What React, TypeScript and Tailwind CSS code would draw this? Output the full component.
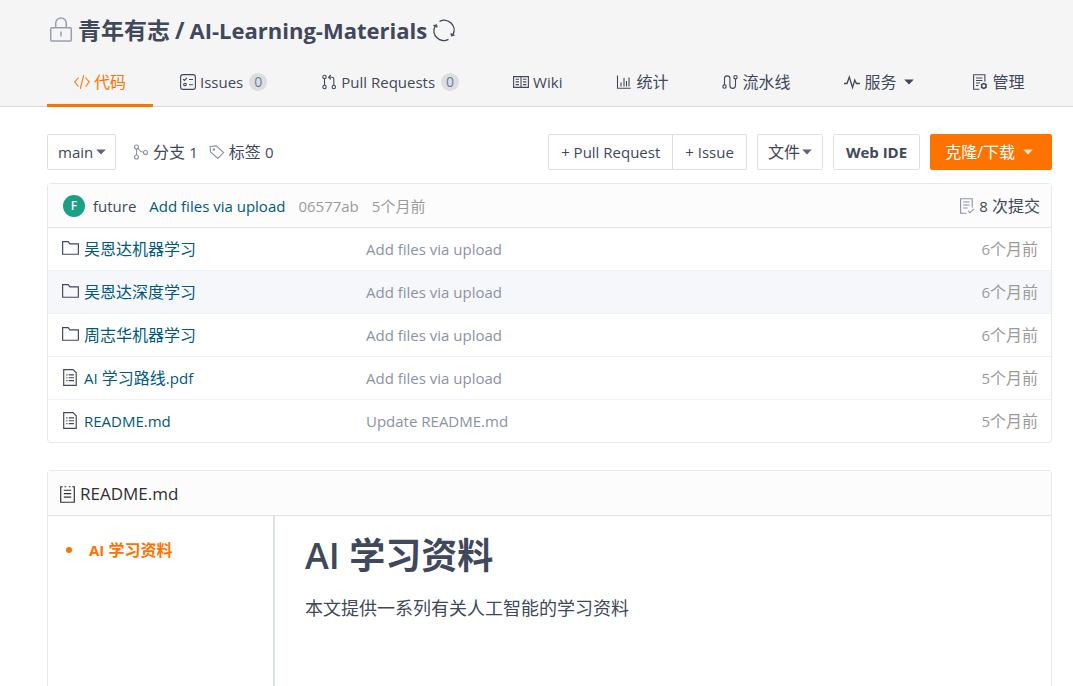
import React, { ReactNode, useState } from "react";

type IconProps = { className?: string; size?: number; children?: ReactNode };

// 16x16 line icon, everything is stroked with the current text color
function Icon({ className = "", size = 16, children }: IconProps) {
  return (
    <svg
      className={`shrink-0 ${className}`}
      width={size}
      height={size}
      viewBox="0 0 16 16"
      fill="none"
      stroke="currentColor"
      strokeWidth="1.1"
      aria-hidden="true"
    >
      {children}
    </svg>
  );
}

function Caret({ className = "" }: { className?: string }) {
  return (
    <svg className={`shrink-0 ${className}`} width="10" height="6" viewBox="0 0 10 6" fill="currentColor" aria-hidden="true">
      <path d="M0.2 0.5h9.6L5 5.5z" />
    </svg>
  );
}

function LockIcon() {
  return (
    <svg className="shrink-0 text-[#9a9eb0]" width="24" height="26" viewBox="0 0 24 26" fill="none" stroke="currentColor" strokeWidth="1.5" aria-hidden="true">
      <rect x="1.7" y="10.7" width="20.6" height="13.3" rx="1" />
      <path d="M6.7 10.5V6.2a5.2 5.2 0 0 1 10.6 0v4.3M12 14.5v5" />
    </svg>
  );
}

function SyncIcon() {
  return (
    <svg width="24" height="24" viewBox="0 0 24 24" fill="none" stroke="currentColor" strokeWidth="1.4" aria-hidden="true">
      <path d="M7.5 3.5A9.8 9.8 0 0 1 21 16.5M16.5 21.3A9.800 9.800 0 0 1 3 8.300" />
      <path d="M1.500 7.500l3.200-.8.400 2.600zM22.500 17.300l-3.200.8-.4-2.600z" fill="currentColor" strokeWidth="0.8" />
    </svg>
  );
}

const icons = {
  code: <path d="M4.5 3.5L.8 8l3.7 4.5M11.5 3.5L15.2 8l-3.7 4.5M9.7 1.2L6.3 14.8" />,
  issues: (
    <>
      <rect x="0.6" y="0.6" width="14.8" height="14.8" rx="2.5" />
      <path d="M3 5.2l1.4 1.2L7 3.8M9 5.5h4M9 10.7h4" />
      <circle cx="5" cy="10.5" r="1.3" />
    </>
  ),
  pull: (
    <>
      <circle cx="3.5" cy="3" r="1.7" />
      <circle cx="3.5" cy="13" r="1.7" />
      <circle cx="12.8" cy="13" r="1.7" />
      <path d="M3.5 4.7v6.6M12.8 11.3V5.2a2 2 0 0 0-2-2H8M9.8 1L7.6 3.2l2.2 2.2" />
    </>
  ),
  wiki: (
    <>
      <path d="M.6 2.6h14.8v10.8H.6zM8 2.6v10.8" />
      <path d="M2.6 5.2H6M2.6 7.9H6M2.6 10.6H6M10 5.2h3.4M10 7.9h3.4M10 10.6h3.4" />
    </>
  ),
  stats: <path d="M1.5 1.5v12.7h13.2M5 8.5v4M8 4v8.5M10.5 7v5.5M13 3.5v9" />,
  pipeline: (
    <>
      <circle cx="2.5" cy="12.6" r="1.7" />
      <circle cx="13.5" cy="3.2" r="1.7" />
      <path d="M2.5 10.9V4.6a2.7 2.7 0 0 1 5.4 0v7a2.8 2.8 0 0 0 5.6 0V4.9" />
    </>
  ),
  service: <path d="M0 9.5h3L5.3 3l3.2 10.5 2.3-7.5 1.6 3.5H16" strokeWidth="1.3" />,
  manage: (
    <>
      <path d="M7.5 15.3H1.6V.7h11.3v7M4 4h6.5M4 6.5h6.5M4 9h4M4 11.5h2.5" />
      <circle cx="11.8" cy="12" r="2.2" strokeWidth="1.5" />
      <path d="M11.8 8.7v1M11.8 14.3v1M8.9 10.3l.9.5M13.8 13.2l.9.5M8.9 13.7l.9-.5M13.8 10.8l.9-.5" />
    </>
  ),
  branch: (
    <>
      <circle cx="3.5" cy="3" r="2" />
      <circle cx="3.5" cy="13" r="2" />
      <circle cx="12.5" cy="8.5" r="2" />
      <path d="M3.5 5v6M4.8 4.5c1.5 2 3 3.5 5.7 3.7" />
    </>
  ),
  tag: (
    <>
      <path d="M1 2.5l6.3-.6 7.3 6.7-5.8 5.9L1.6 8z" />
      <circle cx="5" cy="5.5" r="0.7" />
    </>
  ),
  commits: (
    <>
      <path d="M7.5 15.2H1.6V.8h11.6v8.7M4.2 4h6.4M4.2 7h6.4M4.2 10h4.5" />
      <path d="M9 12.8l2 2 3.8-3.9" />
    </>
  ),
  folder: <path d="M.6 13.4V1.600h5.200l1.600 2h8v9.800z" />,
  file: (
    <>
      <path d="M1.600.600h8.800l3 3v11.800H1.600z" />
      <path d="M4 5.500h1.200M6.300 5.500h5M4 8.200h1.200M6.300 8.200h5M4 10.900h1.200M6.300 10.900h5" />
    </>
  ),
  readme: (
    <>
      <path d="M3.500.700H1.600v14.600h12.800V.700h-1.900M5.200.700h1.600M9.200.700h1.600" />
      <path d="M4.500 4h7M4.500 7.200h7M4.500 10.400h7" />
    </>
  ),
};

// Latin letters run wide next to CJK, so they are set one step smaller
function Latin({ children }: { children: ReactNode }) {
  return <span className="text-[15px]">{children}</span>;
}

const tabs = [
  { id: "code", icon: icons.code, label: "代码" },
  { id: "issues", icon: icons.issues, label: <Latin>Issues</Latin>, count: 0 },
  { id: "pulls", icon: icons.pull, label: <Latin>Pull Requests</Latin>, count: 0 },
  { id: "wiki", icon: icons.wiki, label: <Latin>Wiki</Latin> },
  { id: "stats", icon: icons.stats, label: "统计" },
  { id: "pipeline", icon: icons.pipeline, label: "流水线" },
  { id: "service", icon: icons.service, label: "服务", menu: true },
  { id: "manage", icon: icons.manage, label: "管理" },
];

const files = [
  { name: "吴恩达机器学习", icon: icons.folder, message: "Add files via upload", age: 6 },
  { name: "吴恩达深度学习", icon: icons.folder, message: "Add files via upload", age: 6 },
  { name: "周志华机器学习", icon: icons.folder, message: "Add files via upload", age: 6 },
  { name: <><Latin>AI</Latin> 学习路线<Latin>.pdf</Latin></>, icon: icons.file, message: "Add files via upload", age: 5 },
  { name: <Latin>README.md</Latin>, icon: icons.file, message: "Update README.md", age: 5 },
];

const buttonStyle = "flex h-9 items-center border border-[#dce1e6] bg-white";

export default function App() {
  const [branch, setBranch] = useState("main");

  return (
    <div className="flex min-h-screen flex-col bg-white font-['Open_Sans','Noto_Sans_CJK_SC',sans-serif] text-base leading-6 text-[#40485b]">
      <header className="border-b border-[#dcdcdc] bg-[#f5f5f5] pr-[21px] pl-[47px]">
        <h1 className="flex h-[60px] items-center gap-[5px] pl-0.5 text-[23px] font-bold">
          <LockIcon />
          <a href="#owner">青年有志</a>
          <span>/</span>
          <a href="#repo" className="text-[22px]">AI-Learning-Materials</a>
          <button type="button" aria-label="同步">
            <SyncIcon />
          </button>
        </h1>
        <nav className="-mb-px flex">
          {tabs.map((tab) => (
            <a
              key={tab.id}
              href={`#${tab.id}`}
              className={`flex h-[47px] items-center border-b-3 px-[27px] whitespace-nowrap ${
                tab.id === "code" ? "border-[#fe7300] text-[#fe7300]" : "border-transparent"
              }`}
            >
              <Icon className="mr-1">{tab.icon}</Icon>
              {tab.label}
              {tab.count !== undefined && (
                <span className="ml-1.5 flex size-[18px] items-center justify-center rounded-full bg-[#dcdddf] text-sm text-[#6c7ba1]">
                  {tab.count}
                </span>
              )}
              {tab.menu && <Caret className="mr-1 ml-2" />}
            </a>
          ))}
        </nav>
      </header>

      <main className="flex flex-1 flex-col pt-[27px] pr-[21px] pl-[47px]">
        <div className="flex items-center">
          <div className="relative">
            <select
              aria-label="分支"
              value={branch}
              onChange={(event) => setBranch(event.target.value)}
              className="h-9 appearance-none rounded-xs border border-[#dce1e6] bg-white pr-[21px] pl-2.5 text-[15px]"
            >
              <option>main</option>
            </select>
            <Caret className="pointer-events-none absolute top-[15px] right-2.5 text-[#5f6577]" />
          </div>
          <a href="#branches" className="ml-[17px] flex items-center gap-1">
            <Icon className="text-[#8c92a4]">{icons.branch}</Icon>
            <span>分支 <Latin>1</Latin></span>
          </a>
          <a href="#tags" className="ml-[11px] flex items-center gap-1">
            <Icon className="text-[#8c92a4]">{icons.tag}</Icon>
            <span>标签 <Latin>0</Latin></span>
          </a>

          <div className="ml-auto flex gap-2.5">
            <div className="flex text-[15px]">
              <button type="button" className={`${buttonStyle} rounded-l-xs px-3`}>+ Pull Request</button>
              <button type="button" className={`${buttonStyle} -ml-px rounded-r-xs px-3`}>+ Issue</button>
            </div>
            <button type="button" className={`${buttonStyle} gap-0.5 rounded-xs px-2.5`}>
              文件 <Caret className="text-[#5f6577]" />
            </button>
            <button type="button" className={`${buttonStyle} rounded-xs px-3 text-[15px] font-bold`}>Web IDE</button>
            <button type="button" className="flex h-9 items-center gap-2 rounded-xs bg-[#fe7300] px-[15px] text-white">
              克隆/下载 <Caret className="mr-1 text-white/80" />
            </button>
          </div>
        </div>

        <section className="mt-[13px] rounded border border-[#e3e9ed]">
          <div className="flex h-11 items-center border-b border-[#dce3e8] bg-[#fcfcfc] pr-[11px] pl-[15px]">
            <span className="flex size-[22px] items-center justify-center rounded-full bg-[#1aa084] text-xs font-semibold text-white">
              F
            </span>
            <div className="ml-2 flex gap-[13px] text-[15px]">
              <a href="#future">future</a>
              <a href="#commit" className="text-[#005980]">Add files via upload</a>
              <a href="#commit" className="text-[#9b9b9b]">06577ab</a>
              <span className="text-[#9b9b9b]">5个月前</span>
            </div>
            <a href="#commits" className="ml-auto flex items-center gap-1">
              <Icon className="text-[#8c92a4]">{icons.commits}</Icon>
              <span><Latin>8</Latin> 次提交</span>
            </a>
          </div>
          <table className="w-full table-fixed border-separate border-spacing-0">
            <tbody>
              {files.map((file, index) => (
                <tr key={index} className="group nth-2:bg-[#f6f7fb]">
                  <td className="h-[43px] w-[304px] border-b border-[#eef1f4] pl-3.5 group-last:h-[42px] group-last:border-0">
                    <a href="#file" className="flex items-center gap-[5px] text-[#005980]">
                      <Icon size={17} className="mb-0.5 text-[#40485b]">{file.icon}</Icon>
                      <span>{file.name}</span>
                    </a>
                  </td>
                  <td className="border-b border-[#eef1f4] pl-3.5 text-[15px] text-[#8c92a4] group-last:border-0">{file.message}</td>
                  <td className="w-40 border-b border-[#eef1f4] pr-[13px] text-right text-[#9b9b9b] group-last:border-0">
                    <Latin>{file.age}</Latin>个月前
                  </td>
                </tr>
              ))}
            </tbody>
          </table>
        </section>

        <section className="mt-[27px] flex flex-1 flex-col rounded-t border border-b-0 border-[#e3e9ed]">
          <h2 className="flex h-[45px] items-center gap-1 border-b border-[#dce1e6] bg-[#fcfcfc] pt-0.5 pl-[11px] text-[17px] text-[#303030]">
            <Icon size={17}>{icons.readme}</Icon>
            README.md
          </h2>
          <div className="flex flex-1">
            <aside className="w-[227px] border-r-2 border-[#dce1e6] pt-[22px] pl-[18px] font-bold text-[#fe7300]">
              <a href="#toc" className="flex items-center gap-[17px]">
                <span className="size-1.5 rounded-full bg-[#fe7300]" />
                <span><Latin>AI</Latin> 学习资料</span>
              </a>
            </aside>
            <article className="px-[30px] pt-4">
              <h1 className="text-4xl leading-12 font-bold">
                <span className="font-semibold">AI</span> 学习资料
              </h1>
              <p className="mt-3.5 text-lg">本文提供一系列有关人工智能的学习资料</p>
            </article>
          </div>
        </section>
      </main>
    </div>
  );
}
